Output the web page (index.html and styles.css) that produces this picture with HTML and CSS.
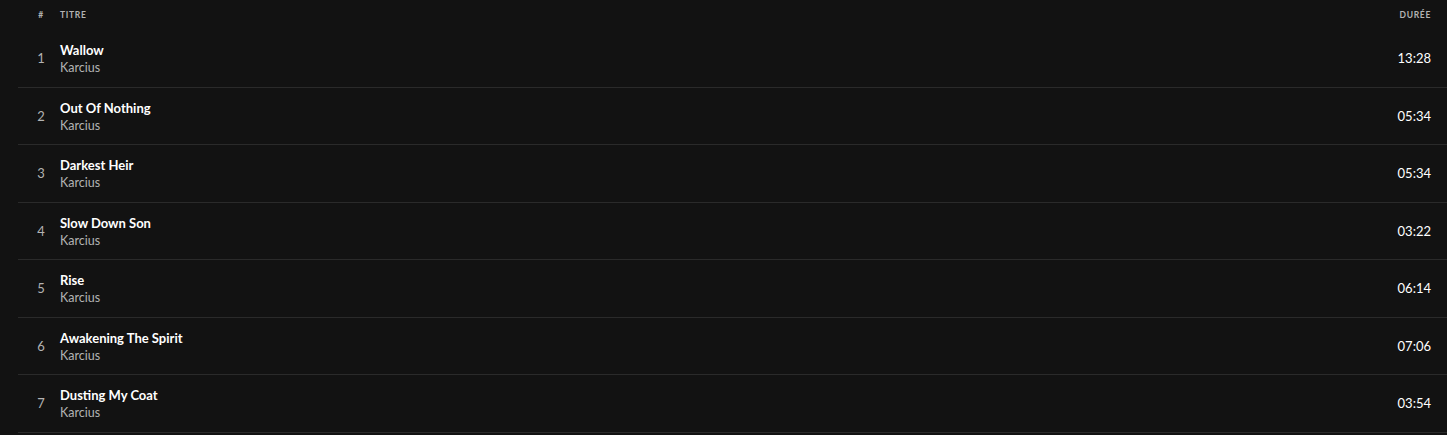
FILE: index.html
```html
<!DOCTYPE html>
<html lang="fr">
<head>
    <meta charset="UTF-8">
    <meta name="viewport" content="width=device-width, initial-scale=1.0">
    <title>Titres</title>
    <link rel="stylesheet" href="styles.css">
</head>
<body>
    <div class="tracklist">
        <div class="track-head">
            <div class="col-num">#</div>
            <div class="col-title">Titre</div>
            <div class="col-time">Durée</div>
        </div>
        <div class="track">
            <div class="col-num">1</div>
            <div class="col-title"><div class="name">Wallow</div><div class="artist">Karcius</div></div>
            <div class="col-time">13:28</div>
        </div>
        <div class="track">
            <div class="col-num">2</div>
            <div class="col-title"><div class="name">Out Of Nothing</div><div class="artist">Karcius</div></div>
            <div class="col-time">05:34</div>
        </div>
        <div class="track">
            <div class="col-num">3</div>
            <div class="col-title"><div class="name">Darkest Heir</div><div class="artist">Karcius</div></div>
            <div class="col-time">05:34</div>
        </div>
        <div class="track">
            <div class="col-num">4</div>
            <div class="col-title"><div class="name">Slow Down Son</div><div class="artist">Karcius</div></div>
            <div class="col-time">03:22</div>
        </div>
        <div class="track">
            <div class="col-num">5</div>
            <div class="col-title"><div class="name">Rise</div><div class="artist">Karcius</div></div>
            <div class="col-time">06:14</div>
        </div>
        <div class="track">
            <div class="col-num">6</div>
            <div class="col-title"><div class="name">Awakening The Spirit</div><div class="artist">Karcius</div></div>
            <div class="col-time">07:06</div>
        </div>
        <div class="track">
            <div class="col-num">7</div>
            <div class="col-title"><div class="name">Dusting My Coat</div><div class="artist">Karcius</div></div>
            <div class="col-time">03:54</div>
        </div>
    </div>
</body>
</html>
```

FILE: styles.css
```css
body {
    margin: 0;
    background-color: #121212;
    color: #fff;
    font-family: Lato, "Liberation Sans", sans-serif;
}
.tracklist {
    padding-left: 18px;
}
.track-head, .track {
    display: flex;
    align-items: center;
    padding-right: 16px;
}
.track-head {
    height: 30px;
    font-size: 8.5px;
    font-weight: 700;
    letter-spacing: 0.7px;
    text-transform: uppercase;
    color: #b3b3b3;
}
.track {
    height: 57.5px;
    box-sizing: border-box;
    border-bottom: 1px solid #2a2a2a;
}
.col-num {
    width: 42px;
    padding-left: 4px;
    box-sizing: border-box;
    text-align: center;
}
.track .col-num {
    font-size: 13px;
    color: #b3b3b3;
}
.col-title {
    flex: 1;
}
.track .col-title {
    padding-top: 2px;
}
.name {
    font-size: 13px;
    font-weight: 700;
    line-height: 17px;
}
.artist {
    font-size: 12.5px;
    line-height: 17px;
    color: #b3b3b3;
}
.col-time {
    text-align: right;
}
.track .col-time {
    font-size: 13px;
}
```
